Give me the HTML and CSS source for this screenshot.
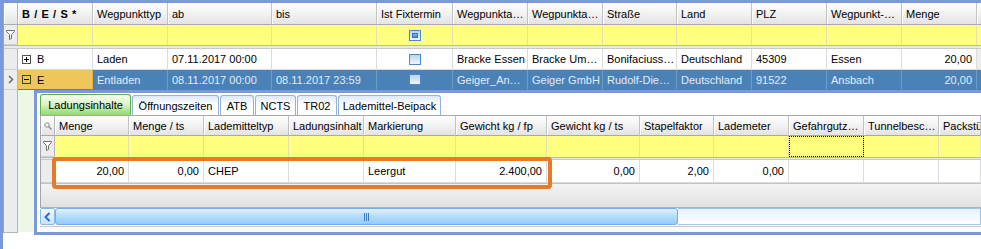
FILE: index.html
```html
<!DOCTYPE html>
<html lang="de">
<head>
    <meta charset="UTF-8">
    <meta name="viewport" content="width=device-width, initial-scale=1.0">
    <title>Wegpunkte</title>
    <link rel="stylesheet" href="styles.css">
</head>
<body>
<div class="screen">
    <div class="main">
        <div class="row head">
            <div class="cell sel"></div>
            <div class="cell bold">B / E / S *</div>
            <div class="cell">Wegpunkttyp</div>
            <div class="cell">ab</div>
            <div class="cell">bis</div>
            <div class="cell">Ist Fixtermin</div>
            <div class="cell">Wegpunkta…</div>
            <div class="cell">Wegpunkta…</div>
            <div class="cell">Straße</div>
            <div class="cell">Land</div>
            <div class="cell">PLZ</div>
            <div class="cell">Wegpunkt-…</div>
            <div class="cell">Menge</div>
            <div class="cell"></div>
        </div>
        <div class="row filter">
            <div class="cell sel">
                <svg width="9" height="10" viewBox="0 0 9 10"><path d="M0.5 0.5h8v1l-3 3v4l-2 1v-5l-3-3z" fill="#fff" stroke="#707070"/></svg>
            </div>
            <div class="cell"></div>
            <div class="cell"></div>
            <div class="cell"></div>
            <div class="cell"></div>
            <div class="cell center"><span class="check mixed"><span></span></span></div>
            <div class="cell"></div>
            <div class="cell"></div>
            <div class="cell"></div>
            <div class="cell"></div>
            <div class="cell"></div>
            <div class="cell"></div>
            <div class="cell"></div>
            <div class="cell"></div>
        </div>
        <div class="sep"></div>
        <div class="row data">
            <div class="cell sel"></div>
            <div class="cell">
                <svg width="9" height="9" viewBox="0 0 9 9"><rect x="0.5" y="0.5" width="8" height="8" fill="#fff" stroke="#505050"/><path d="M2 4.5h5M4.5 2v5" stroke="#000"/></svg>
                B
            </div>
            <div class="cell">Laden</div>
            <div class="cell">07.11.2017 00:00</div>
            <div class="cell"></div>
            <div class="cell center"><span class="check"></span></div>
            <div class="cell">Bracke Essen</div>
            <div class="cell">Bracke Um…</div>
            <div class="cell">Bonifaciuss…</div>
            <div class="cell">Deutschland</div>
            <div class="cell">45309</div>
            <div class="cell">Essen</div>
            <div class="cell num">20,00</div>
            <div class="cell end"></div>
        </div>
        <div class="row data selected">
            <div class="cell sel">
                <svg width="6" height="9" viewBox="0 0 6 9"><path d="M1 1l3.5 3.5L1 8" fill="none" stroke="#6a6a6a" stroke-width="1.5"/></svg>
            </div>
            <div class="cell current">
                <svg width="9" height="9" viewBox="0 0 9 9"><rect x="0.5" y="0.5" width="8" height="8" fill="none" stroke="#404040"/><path d="M2 4.5h5" stroke="#000"/></svg>
                E
            </div>
            <div class="cell">Entladen</div>
            <div class="cell">08.11.2017 00:00</div>
            <div class="cell">08.11.2017 23:59</div>
            <div class="cell center"><span class="check"></span></div>
            <div class="cell">Geiger_An…</div>
            <div class="cell">Geiger GmbH</div>
            <div class="cell">Rudolf-Die…</div>
            <div class="cell">Deutschland</div>
            <div class="cell">91522</div>
            <div class="cell">Ansbach</div>
            <div class="cell num">20,00</div>
            <div class="cell end"></div>
        </div>
    </div>

    <div class="detail">
        <div class="detail-sel"></div>
        <div class="detail-indent"></div>
        <div class="panel">
            <div class="tabs">
                <div class="tab active">Ladungsinhalte</div>
                <div class="tab">Öffnungszeiten</div>
                <div class="tab">ATB</div>
                <div class="tab">NCTS</div>
                <div class="tab">TR02</div>
                <div class="tab">Lademittel-Beipack</div>
            </div>

            <div class="sub">
                <div class="row head">
                    <div class="cell sel">
                        <svg width="8" height="8" viewBox="0 0 8 8"><circle cx="3" cy="3" r="2.2" fill="none" stroke="#8c8c8c"/><path d="M4.6 4.6L7.5 7.5" stroke="#8c8c8c" stroke-width="1.4"/></svg>
                    </div>
                    <div class="cell">Menge</div>
                    <div class="cell">Menge / ts</div>
                    <div class="cell">Lademitteltyp</div>
                    <div class="cell">Ladungsinhalt</div>
                    <div class="cell">Markierung</div>
                    <div class="cell">Gewicht kg / fp</div>
                    <div class="cell">Gewicht kg / ts</div>
                    <div class="cell">Stapelfaktor</div>
                    <div class="cell">Lademeter</div>
                    <div class="cell">Gefahrgutz…</div>
                    <div class="cell">Tunnelbesc…</div>
                    <div class="cell">Packstü</div>
                </div>
                <div class="row filter">
                    <div class="cell sel">
                        <svg width="9" height="10" viewBox="0 0 9 10"><path d="M0.5 0.5h8v1l-3 3v4l-2 1v-5l-3-3z" fill="#fff" stroke="#707070"/></svg>
                    </div>
                    <div class="cell"></div>
                    <div class="cell"></div>
                    <div class="cell"></div>
                    <div class="cell"></div>
                    <div class="cell"></div>
                    <div class="cell"></div>
                    <div class="cell"></div>
                    <div class="cell"></div>
                    <div class="cell"></div>
                    <div class="cell focus"></div>
                    <div class="cell"></div>
                    <div class="cell"></div>
                </div>
                <div class="sep"></div>
                <div class="row data">
                    <div class="cell sel"></div>
                    <div class="cell num">20,00</div>
                    <div class="cell num">0,00</div>
                    <div class="cell">CHEP</div>
                    <div class="cell"></div>
                    <div class="cell">Leergut</div>
                    <div class="cell num">2.400,00</div>
                    <div class="cell num">0,00</div>
                    <div class="cell num">2,00</div>
                    <div class="cell num">0,00</div>
                    <div class="cell"></div>
                    <div class="cell"></div>
                    <div class="cell"></div>
                </div>
                <div class="sub-empty"></div>
            </div>

            <div class="scroll">
                <div class="scroll-btn">
                    <svg width="7" height="10" viewBox="0 0 7 10"><path d="M5.5 1L1.5 5l4 4" fill="none" stroke="#2d6fc6" stroke-width="2"/></svg>
                </div>
                <div class="scroll-thumb">
                    <svg width="5" height="8" viewBox="0 0 5 8"><path d="M0.5 0v8M2.5 0v8M4.5 0v8" stroke="#3a7cc8"/></svg>
                </div>
                <div class="scroll-track"></div>
            </div>
            <div class="panel-foot"></div>
        </div>
    </div>

    <div class="mark"></div>
</div>
</body>
</html>
```

FILE: styles.css
```css
* {
    margin: 0;
    padding: 0;
    box-sizing: border-box;
}
body {
    font-family: "Liberation Sans", Arial, sans-serif;
    font-size: 11px;
    color: #000;
    background: #fff;
}
.screen {
    position: relative;
    width: 981px;
    height: 249px;
    border-top: 3px solid #7b99da;
    border-left: 3px solid #7b99da;
    overflow: hidden;
}

/* grids */
.main {
    border-left: 1px solid #a4a4a4;
}
.row {
    display: grid;
}
.main .row {
    grid-template-columns: 14px 75px 75px 104px 105px 76px 75px 75px 74px 75px 75px 75px 75px 1fr;
}
.sub .row {
    grid-template-columns: 14px 74px 75px 85px 75px 92px 91px 93px 74px 75px 75px 75px 1fr;
}
.cell {
    display: flex;
    align-items: center;
    gap: 6px;
    padding: 0 4px;
    border-right: 1px solid #dcdcdc;
    white-space: nowrap;
    overflow: hidden;
}
.num {
    justify-content: flex-end;
}
.center {
    justify-content: center;
}
.bold {
    font-weight: bold;
    letter-spacing: 0.6px;
}

.main .head { height: 22px; }
.main .filter { height: 20px; }
.main .data { height: 21px; }
.main .selected { height: 20px; }
.sub .head { height: 20px; }
.sub .filter { height: 21px; }
.sub .data { height: 23px; }

.head .cell {
    background: linear-gradient(#fefefe, #f2f2f2 50%, #e3e3e3);
    border-right-color: #c2c2c2;
    border-bottom: 1px solid #a9a9a9;
    box-shadow: inset 1px 0 #fff;
}
.filter .cell {
    background: #ffff80;
    border-right-color: #e2e2aa;
}
.focus {
    outline: 1px dotted #000;
    outline-offset: -1px;
}
.sep {
    height: 4px;
    background: #e8e8e8;
    border-top: 1px solid #b8b8b8;
    border-bottom: 1px solid #cacaca;
}
.sub .sep {
    height: 3px;
}
.data .cell {
    background: #fff;
    border-bottom: 1px solid #dadada;
}
.data .end {
    background: #ededed;
}
.selected .cell {
    background: #4a82b7;
    color: #e3ebf5;
    border-right-color: #6f9dc9;
    border-bottom-color: #4a82b7;
}
.selected .cell.current {
    background: #f0c65c;
    color: #000;
    border-right-color: #d8b050;
}
.row .cell.sel {
    padding: 0;
    justify-content: center;
    background: #ececec;
    border-right: 1px solid #b5b5b5;
    border-bottom: 1px solid #cfcfcf;
}
.head .cell.sel {
    background: linear-gradient(#fefefe, #f2f2f2 50%, #e3e3e3);
    border-bottom-color: #a9a9a9;
}

.check {
    width: 12px;
    height: 11px;
    display: flex;
    align-items: center;
    justify-content: center;
    border: 1px solid #4f88c8;
    background: linear-gradient(#b7d5f4, #eef6ff);
}
.check.mixed span {
    width: 6px;
    height: 5px;
    border: 1px solid #3a73b8;
    background: linear-gradient(#8ab6e6, #4d88cc);
}

/* detail area */
.detail {
    display: flex;
    height: 145px;
}
.detail-sel {
    width: 15px;
    margin-bottom: 2px;
    background: #ececec;
    border-left: 1px solid #a4a4a4;
    border-right: 1px solid #b5b5b5;
    border-bottom: 1px solid #b5b5b5;
}
.detail-indent {
    width: 16px;
    margin-bottom: 3px;
    background: #eef7e6;
}
.panel {
    flex: 1;
    display: flex;
    flex-direction: column;
    padding: 1px 0 0 3px;
    border: 3px solid #7b99da;
    border-right: none;
    background: #fff;
}
.tabs {
    display: flex;
    align-items: flex-end;
    gap: 1px;
    height: 21px;
}
.tab {
    height: 20px;
    display: flex;
    align-items: center;
    justify-content: center;
    border: 1px solid #94b3d9;
    border-bottom: none;
    border-radius: 3px 3px 0 0;
    background: linear-gradient(#dce9fa, #fff 45%);
}
.tab:nth-child(1) { width: 91px; }
.tab:nth-child(2) { width: 87px; }
.tab:nth-child(3) { width: 34px; }
.tab:nth-child(4) { width: 41px; }
.tab:nth-child(5) { width: 40px; }
.tab:nth-child(6) { width: 103px; }
.tab.active {
    height: 21px;
    border-color: #62ae4a;
    background: linear-gradient(#f6fdf1, #d6f3c3 50%, #8fd96c);
}
.sub {
    border-left: 1px solid #a4a4a4;
    border-top: 1px solid #a8a8a8;
}
.sub-empty {
    height: 25px;
    background: linear-gradient(#f3f3f3, #e1e1e1);
    border-top: 1px solid #c4c4c4;
    border-bottom: 1px solid #b2b2b2;
}

/* horizontal scrollbar */
.scroll {
    display: flex;
    height: 17px;
}
.scroll-btn {
    width: 15px;
    display: flex;
    align-items: center;
    justify-content: center;
    border: 1px solid #86b8ea;
    border-radius: 2px;
    background: linear-gradient(#eef7ff, #c6e3fc);
}
.scroll-thumb {
    width: 623px;
    display: flex;
    align-items: center;
    justify-content: center;
    border: 1px solid #70aef0;
    border-radius: 3px;
    background: linear-gradient(#e2f2ff, #b4dcff 50%, #92cbfa);
}
.scroll-track {
    flex: 1;
    border: 1px solid #9cc8f0;
    border-left: none;
    background: linear-gradient(#e4f1ff, #fff);
}
.panel-foot {
    flex: 1;
    margin-top: 1px;
    border-top: 1px solid #c8c8c8;
    background: #fafafa;
}

/* highlight drawn over the row */
.mark {
    position: absolute;
    left: 49px;
    top: 154px;
    width: 500px;
    height: 32px;
    border: 4px solid #e97a25;
    border-radius: 4px;
}
```
